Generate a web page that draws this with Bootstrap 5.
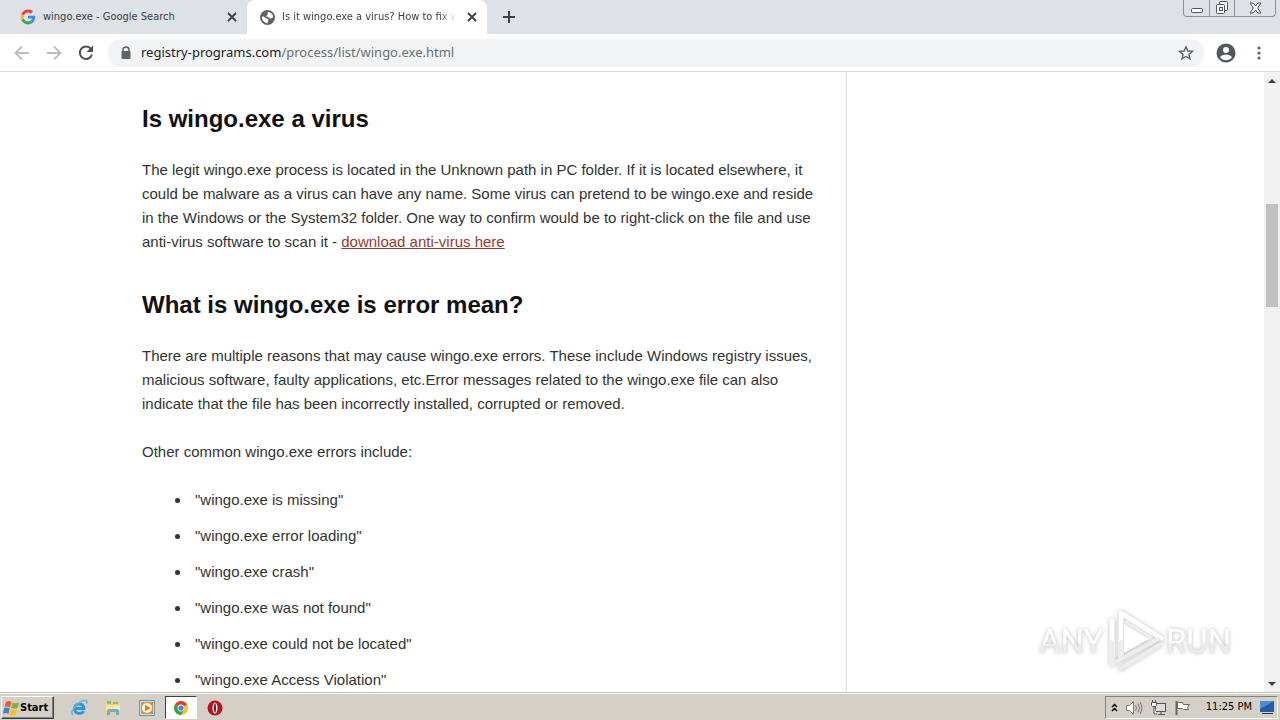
<!DOCTYPE html>
<html lang="en">
<head>
<meta charset="utf-8">
<meta name="viewport" content="width=device-width, initial-scale=1">
<title>Is it wingo.exe a virus? How to fix wingo.exe</title>
<link href="https://cdn.jsdelivr.net/npm/bootstrap@5.3.0/dist/css/bootstrap.min.css" rel="stylesheet">
<script src="https://cdn.jsdelivr.net/npm/bootstrap@5.3.0/dist/js/bootstrap.bundle.min.js" defer></script>
<style>
  body { font-family: "Liberation Sans", Arial, sans-serif; color: #333; background: #fff; }
  button { border: 0; background: none; padding: 0; color: inherit; line-height: 0; }
  svg { display: block; flex: none; }
  .ui-font { font-family: "DejaVu Sans Condensed", "DejaVu Sans", sans-serif; }

  .tabstrip { height: 34px; background: #dee1e6; color: #3c4043; }
  .browser-tab { height: 34px; font-size: 11px; gap: 7px; padding: 0 10px 0 20px; }
  .tab-one { width: 247px; }
  .tab-two { width: 240px; padding-left: 13px; background: #fff; border-radius: 8px 8px 0 0; }
  .tab-title { overflow: hidden; white-space: nowrap; min-width: 0; }
  .tab-two .tab-title { -webkit-mask-image: linear-gradient(to left, transparent, #000 16px); mask-image: linear-gradient(to left, transparent, #000 16px); }
  .window-buttons { height: 17px; margin-right: 4px; border: 1px solid #8c919b; border-top: 0; border-radius: 0 0 4px 4px; color: #50545c; }
  .window-buttons button { width: 25px; display: flex; justify-content: center; align-items: center; }
  .window-buttons button + button { border-left: 1px solid #8c919b; }
  .window-buttons button:last-child { width: 41px; }

  .toolbar { height: 38px; border-bottom: 1px solid #dadce0; color: #5f6368; padding: 0 14px; gap: 16px; }
  .address { height: 28px; border-radius: 14px; background: #f1f3f4; margin: 0 -4px 0 -2px; padding: 0 10px; gap: 7px; }
  .url { font-family: "Noto Sans", sans-serif; font-size: 13px; color: #6b7075; text-decoration: none; }
  .url span { color: #202124; }

  .page-main { width: 67%; border-right: 1px solid #ddd; padding: 32px 20px 0 142px; font-size: 15px; line-height: 24px; }
  .page-main h2 { font-size: 24px; line-height: 30px; font-weight: 700; color: #111; margin-bottom: 24px; }
  .page-main p { margin-bottom: 24px; }
  .page-main p + h2 { padding-top: 12px; }
  .page-main a { color: #983a2c; }
  .page-main ul { padding-left: 49px; margin: 0; }
  .page-main li { margin-bottom: 12px; padding-left: 4px; }

  .scroller { width: 16px; background: #f1f1f1; }
  .scroller button { height: 17px; display: flex; align-items: center; justify-content: center; }
  .thumb { margin: 0 2px; background: #c1c1c1; }

  .watermark { right: 46px; bottom: 18px; width: 198px; height: 68px; filter: drop-shadow(0 0 2px #bbb); }
  .watermark text { font-family: Roboto, "Liberation Sans", sans-serif; font-size: 33px; }

  .taskbar { height: 28px; background: #d4d0c8; border-top: 1px solid #c8c5b8; box-shadow: inset 0 1px #fff; padding: 3px 2px 1px 1px; color: #000; }
  .start { width: 53px; height: 23px; border: 1px solid; border-color: #fff #404040 #404040 #fff; box-shadow: inset -1px -1px #808080; background: #d4d0c8; display: flex; align-items: center; padding-left: 1px; font-size: 11px; font-weight: 700; }
  .task { width: 34px; height: 23px; display: flex; align-items: center; justify-content: center; }
  .task-active { width: 32px; margin: 0 1px; background: #fff; border: 1px solid; border-color: #404040 #fff #fff #404040; }
  .tray { height: 23px; border: 1px solid; border-color: #808080 #fff #fff #808080; padding: 0 2px 0 5px; font-size: 11px; gap: 7px; }
</style>
</head>
<body class="d-flex flex-column vh-100 overflow-hidden">

<header>
  <div class="tabstrip ui-font d-flex">
    <div class="browser-tab tab-one d-flex align-items-center">
      <svg width="16" height="16" viewBox="-2 -2 52 52"><path fill="#EA4335" d="M24 9.500c3.500 0 6.700 1.200 9.200 3.600l6.900-6.900C35.900 2.400 30.500 0 24 0 14.600 0 6.500 5.400 2.600 13.200l8 6.200C12.400 13.700 17.700 9.500 24 9.500z"/><path fill="#4285F4" d="M47 24.500c0-1.600-.2-3.100-.4-4.500H24v9h12.900c-.6 3-2.200 5.500-4.700 7.200l7.700 6C44.400 38 47 31.800 47 24.500z"/><path fill="#FBBC05" d="M10.500 28.600a14.500 14.500 0 0 1 0-9.200l-8-6.200a24 24 0 0 0 0 21.600z"/><path fill="#34A853" d="M24 48c6.500 0 11.900-2.100 15.900-5.800l-7.700-6c-2.200 1.500-4.900 2.300-8.200 2.300-6.300 0-11.600-4.200-13.500-9.900l-8 6.200C6.500 42.600 14.600 48 24 48z"/></svg>
      <span class="tab-title flex-grow-1">wingo.exe - Google Search</span>
      <button aria-label="Close tab"><svg width="10" height="10" viewBox="0 0 10 10"><path d="M1 1l8 8M9 1l-8 8" stroke="#3c4043" stroke-width="1.800"/></svg></button>
    </div>
    <div class="browser-tab tab-two d-flex align-items-center">
      <svg width="15" height="15" viewBox="0 0 16 16"><circle cx="8" cy="8" r="8" fill="#5f6368"/><path d="M9.500 2c-2 .2-2 1.200-1 2 .7 1-1 1-1.500 2-.6 1.300 1 1.400 2 1.600 1.500.4 1 2 2.500 1.400L14 8c0-3-1.500-5-4.500-6zM2 7c0 4 2.500 6.800 6 7 .8-1 0-2 1-3 .5-1.500-1-2-2.200-2C6 9 5.500 7.500 4.500 7.200z" fill="#fff"/></svg>
      <span class="tab-title flex-grow-1">Is it wingo.exe a virus? How to fix wingo.exe</span>
      <button class="ms-1" aria-label="Close tab"><svg width="10" height="10" viewBox="0 0 10 10"><path d="M1 1l8 8M9 1l-8 8" stroke="#3c4043" stroke-width="1.800"/></svg></button>
    </div>
    <button class="ms-3" aria-label="New tab"><svg width="12" height="12" viewBox="0 0 12 12"><path d="M6 0v12M0 6h12" stroke="#3c4043" stroke-width="2"/></svg></button>
    <div class="window-buttons d-flex ms-auto">
      <button aria-label="Minimize"><svg width="14" height="16" viewBox="0 0 14 16"><rect x="1.500" y="8.500" width="11" height="4" rx="1" fill="#fff" stroke="currentColor"/></svg></button>
      <button aria-label="Restore"><svg width="14" height="14" viewBox="0 0 14 14"><g fill="#fff" stroke="currentColor"><rect x="4.500" y=".5" width="8" height="9" rx="1"/><rect x="1.500" y="3.500" width="8" height="9" rx="1"/><rect x="4.500" y="6.500" width="3" height="3"/></g></svg></button>
      <button aria-label="Close window"><svg width="13" height="12" viewBox="0 0 13 12"><path d="M1 1h3l2.500 3L9 1h3L8.500 6l3.500 5H9L6.500 8 4 11H1l3.500-5z" fill="#fff" stroke="currentColor"/></svg></button>
    </div>
  </div>

  <div class="toolbar d-flex align-items-center">
    <button aria-label="Back"><svg width="16" height="16" viewBox="0 0 16 16"><path d="M8 1.500L1.500 8 8 14.500M2 8h13" fill="none" stroke="#babcbe" stroke-width="1.800"/></svg></button>
    <button aria-label="Forward"><svg width="16" height="16" viewBox="0 0 16 16"><path d="M8 1.500L14.500 8 8 14.500M14 8H1" fill="none" stroke="#babcbe" stroke-width="1.800"/></svg></button>
    <button aria-label="Reload"><svg width="16" height="16" viewBox="0 0 16 16"><path d="M13 4A6.200 6.200 0 1 0 14 9.500" fill="none" stroke="#4d5156" stroke-width="2"/><path d="M15 .5v6.500H8.500z" fill="#4d5156"/></svg></button>
    <div class="address d-flex align-items-center flex-grow-1">
      <svg width="16" height="16" viewBox="0 0 16 16"><path d="M5 7V5a3 3 0 0 1 6 0v2" fill="none" stroke="#5f6368" stroke-width="1.500"/><rect x="3.500" y="6" width="9" height="8" rx="1" fill="#5f6368"/></svg>
      <a class="url" href="#top"><span>registry-programs.com</span>/process/list/wingo.exe.html</a>
      <button class="ms-auto" aria-label="Bookmark this page"><svg width="16" height="16" viewBox="0 0 16 16"><path d="M8 1.800l1.800 4.200 4.600.4-3.500 3 1.100 4.500L8 11.500l-4 2.400 1.100-4.500-3.500-3 4.600-.4z" fill="none" stroke="#5f6368" stroke-width="1.400"/></svg></button>
    </div>
    <button aria-label="Profile"><svg width="20" height="20" viewBox="0 0 20 20"><circle cx="10" cy="10" r="9.500" fill="#54585d"/><circle cx="10" cy="7" r="3" fill="#fff"/><path d="M4 14.300c1-2 4-2.800 6-2.800s5 .8 6 2.800c-3 4-9 4-12 0z" fill="#fff"/></svg></button>
    <button aria-label="Menu"><svg width="14" height="16" viewBox="0 0 14 16"><g fill="#5f6368"><circle cx="7" cy="3" r="1.600"/><circle cx="7" cy="8" r="1.600"/><circle cx="7" cy="13" r="1.600"/></g></svg></button>
  </div>
</header>

<main class="d-flex flex-grow-1 overflow-hidden position-relative" id="top">
  <div class="d-flex flex-grow-1 overflow-hidden">
    <article class="page-main">
      <h2>Is wingo.exe a virus</h2>
      <p>The legit wingo.exe process is located in the Unknown path in PC folder. If it is located elsewhere, it could be malware as a virus can have any name. Some virus can pretend to be wingo.exe and reside in the Windows or the System32 folder. One way to confirm would be to right-click on the file and use anti-virus software to scan it - <a href="#download">download anti-virus here</a></p>
      <h2>What is wingo.exe is error mean?</h2>
      <p>There are multiple reasons that may cause wingo.exe errors. These include Windows registry issues, malicious software, faulty applications, etc.Error messages related to the wingo.exe file can also indicate that the file has been incorrectly installed, corrupted or removed.</p>
      <p>Other common wingo.exe errors include:</p>
      <ul>
        <li>"wingo.exe is missing"</li>
        <li>"wingo.exe error loading"</li>
        <li>"wingo.exe crash"</li>
        <li>"wingo.exe was not found"</li>
        <li>"wingo.exe could not be located"</li>
        <li>"wingo.exe Access Violation"</li>
      </ul>
    </article>
  </div>
  <div class="scroller d-flex flex-column flex-shrink-0">
    <button aria-label="Scroll up"><svg width="8" height="4" viewBox="0 0 8 4"><path d="M0 4l4-4 4 4z" fill="#404040"/></svg></button>
    <div class="flex-grow-1 d-flex flex-column">
      <div style="flex:115"></div><div class="thumb" style="flex:103"></div><div style="flex:368"></div>
    </div>
    <button aria-label="Scroll down"><svg width="8" height="4" viewBox="0 0 8 4"><path d="M0 0l4 4 4-4z" fill="#404040"/></svg></button>
  </div>
  <svg class="watermark position-absolute" viewBox="0 0 198 68" role="img" aria-label="ANY RUN">
    <defs><linearGradient id="fade" x1="0" y1="0" x2="0" y2="1"><stop offset=".5" stop-color="#fff"/><stop offset=".6" stop-color="#ececec"/></linearGradient></defs>
    <text x="3" y="47" fill="url(#fade)">ANY</text>
    <text x="130" y="47" fill="url(#fade)">RUN</text>
    <path d="M85 50V7l40 25M76 58V15" fill="none" stroke="#fff" stroke-width="5" stroke-linecap="round" stroke-linejoin="round"/>
    <path d="M76 36v22l46-25M84 63l41-25M85 36v14" fill="none" stroke="#ededed" stroke-width="4" stroke-linecap="round" stroke-linejoin="round"/>
    <path d="M88 18v29l25-14z" fill="#fff"/>
  </svg>
</main>

<footer class="taskbar ui-font d-flex align-items-center">
  <button class="start"><svg width="17" height="16" viewBox="0 0 17 16"><path d="M3 2c2-1.500 4-1 5.500 0L7 7.500C5.500 6.500 3.500 6 1.500 7z" fill="#ea5b25"/><path d="M9.500 2.500c2 1.200 4 1 6.500 0L14.500 8c-2 1-4 1-6.300-.2z" fill="#7fb52f"/><path d="M1.200 8c2-1 4-.5 5.500.5L5.200 14C4 13 2 12.500 0 13.500z" fill="#3f83d5"/><path d="M7.800 9c2 1 4 1.200 6.400.2L12.700 15c-2 1-4.500.8-6.300-.6z" fill="#f5c327"/></svg>Start</button>
  <button class="task ms-2" aria-label="Internet Explorer"><svg width="18" height="18" viewBox="0 0 18 18"><path d="M4.500 9.500h9.500C14 3.500 4.500 3.500 4.500 9.500c0 6 7.500 6 9 2.500" fill="none" stroke="#2f94dc" stroke-width="2.800"/><path d="M3 16.500C-1 12 9 1 16 1.500c1.500.5 1 2.500.5 3.500" fill="none" stroke="#6db4e4" stroke-width="1.500"/></svg></button>
  <button class="task" aria-label="File Explorer"><svg width="18" height="18" viewBox="0 0 18 18"><path d="M2 3h5l1 1h8v11H2z" fill="#f2cf69"/><path d="M3 2h4v3H3zM9 3h5v2H9z" fill="#87bd74"/><path d="M2 6h14v5H2z" fill="#f9e7a0"/><path d="M3 16v-4q0-2 2-2h8q2 0 2 2v4h-3v-3H6v3z" fill="#6aaed6"/></svg></button>
  <button class="task" aria-label="Media Player"><svg width="18" height="18" viewBox="0 0 18 18"><path d="M1.500 1.500h15v15h-15z" fill="#cce4f5" stroke="#5797c6"/><path d="M3 3h12v12H3z" fill="#f28a1b"/><circle cx="9" cy="9" r="5" fill="#fff"/><path d="M7 5.500l5.500 3.500L7 12.500z" fill="#e77b12"/></svg></button>
  <button class="task task-active" aria-label="Google Chrome"><svg width="14" height="14" viewBox="0 0 16 16"><circle cx="8" cy="8" r="8" fill="#fbc116"/><path d="M8 8L1.100 4a8 8 0 0 1 13.800 0z" fill="#e33b2e"/><path d="M8 8L1.100 4A8 8 0 0 0 8 16l3.500-6z" fill="#2da44e"/><circle cx="8" cy="8" r="3.900" fill="#fff"/><circle cx="8" cy="8" r="3" fill="#4285f4"/></svg></button>
  <button class="task" aria-label="Opera"><svg width="16" height="16" viewBox="0 0 16 16"><circle cx="8" cy="8" r="7.500" fill="#b8141b"/><ellipse cx="8" cy="8" rx="2.500" ry="5.500" fill="#fff"/><ellipse cx="8" cy="8" rx="1" ry="4.800" fill="#8c1116"/></svg></button>
  <div class="tray d-flex align-items-center ms-auto">
    <button aria-label="Show hidden icons"><svg width="7" height="9" viewBox="0 0 7 9"><path d="M1 4l2.500-2.500L6 4M1 8l2.500-2.500L6 8" fill="none" stroke="#000" stroke-width="1.500"/></svg></button>
    <svg width="18" height="16" viewBox="0 0 18 16"><path d="M1.500 5.500h3l4-4v13l-4-4h-3z" fill="#fff" stroke="#777"/><path d="M10.500 5q2 3 0 6M13 3.500q3 4.500 0 9M15 2q4 6 0 12" fill="none" stroke="#777"/></svg>
    <svg width="17" height="16" viewBox="0 0 17 16"><rect x="5.500" y="3.500" width="10" height="8" fill="#ddd" stroke="#555"/><path d="M8 14.500h7M11 12v2" stroke="#555"/><path d="M1.500 2.500h5v3l-1 1h-3l-1-1zM4 7v7h3M2.500 0v2M5.500 0v2" fill="#fff" stroke="#555"/></svg>
    <svg width="17" height="16" viewBox="0 0 17 16"><path d="M2.500 1v14" stroke="#666" stroke-width="2"/><path d="M3.500 2.500h5l1 2h6l-2 3 1 2h-5l-1-1h-5z" fill="#fff" stroke="#666"/></svg>
    <time class="ms-2">11:25 PM</time>
    <button aria-label="Show desktop"><svg width="16" height="15" viewBox="0 0 16 15"><path d="M1 1h14v11H1z" fill="#215da9"/><path d="M1 1h14L1 9z" fill="#4d8bd0"/><path d="M3 13h11v1H3z" fill="#333"/></svg></button>
  </div>
</footer>
</body>
</html>
